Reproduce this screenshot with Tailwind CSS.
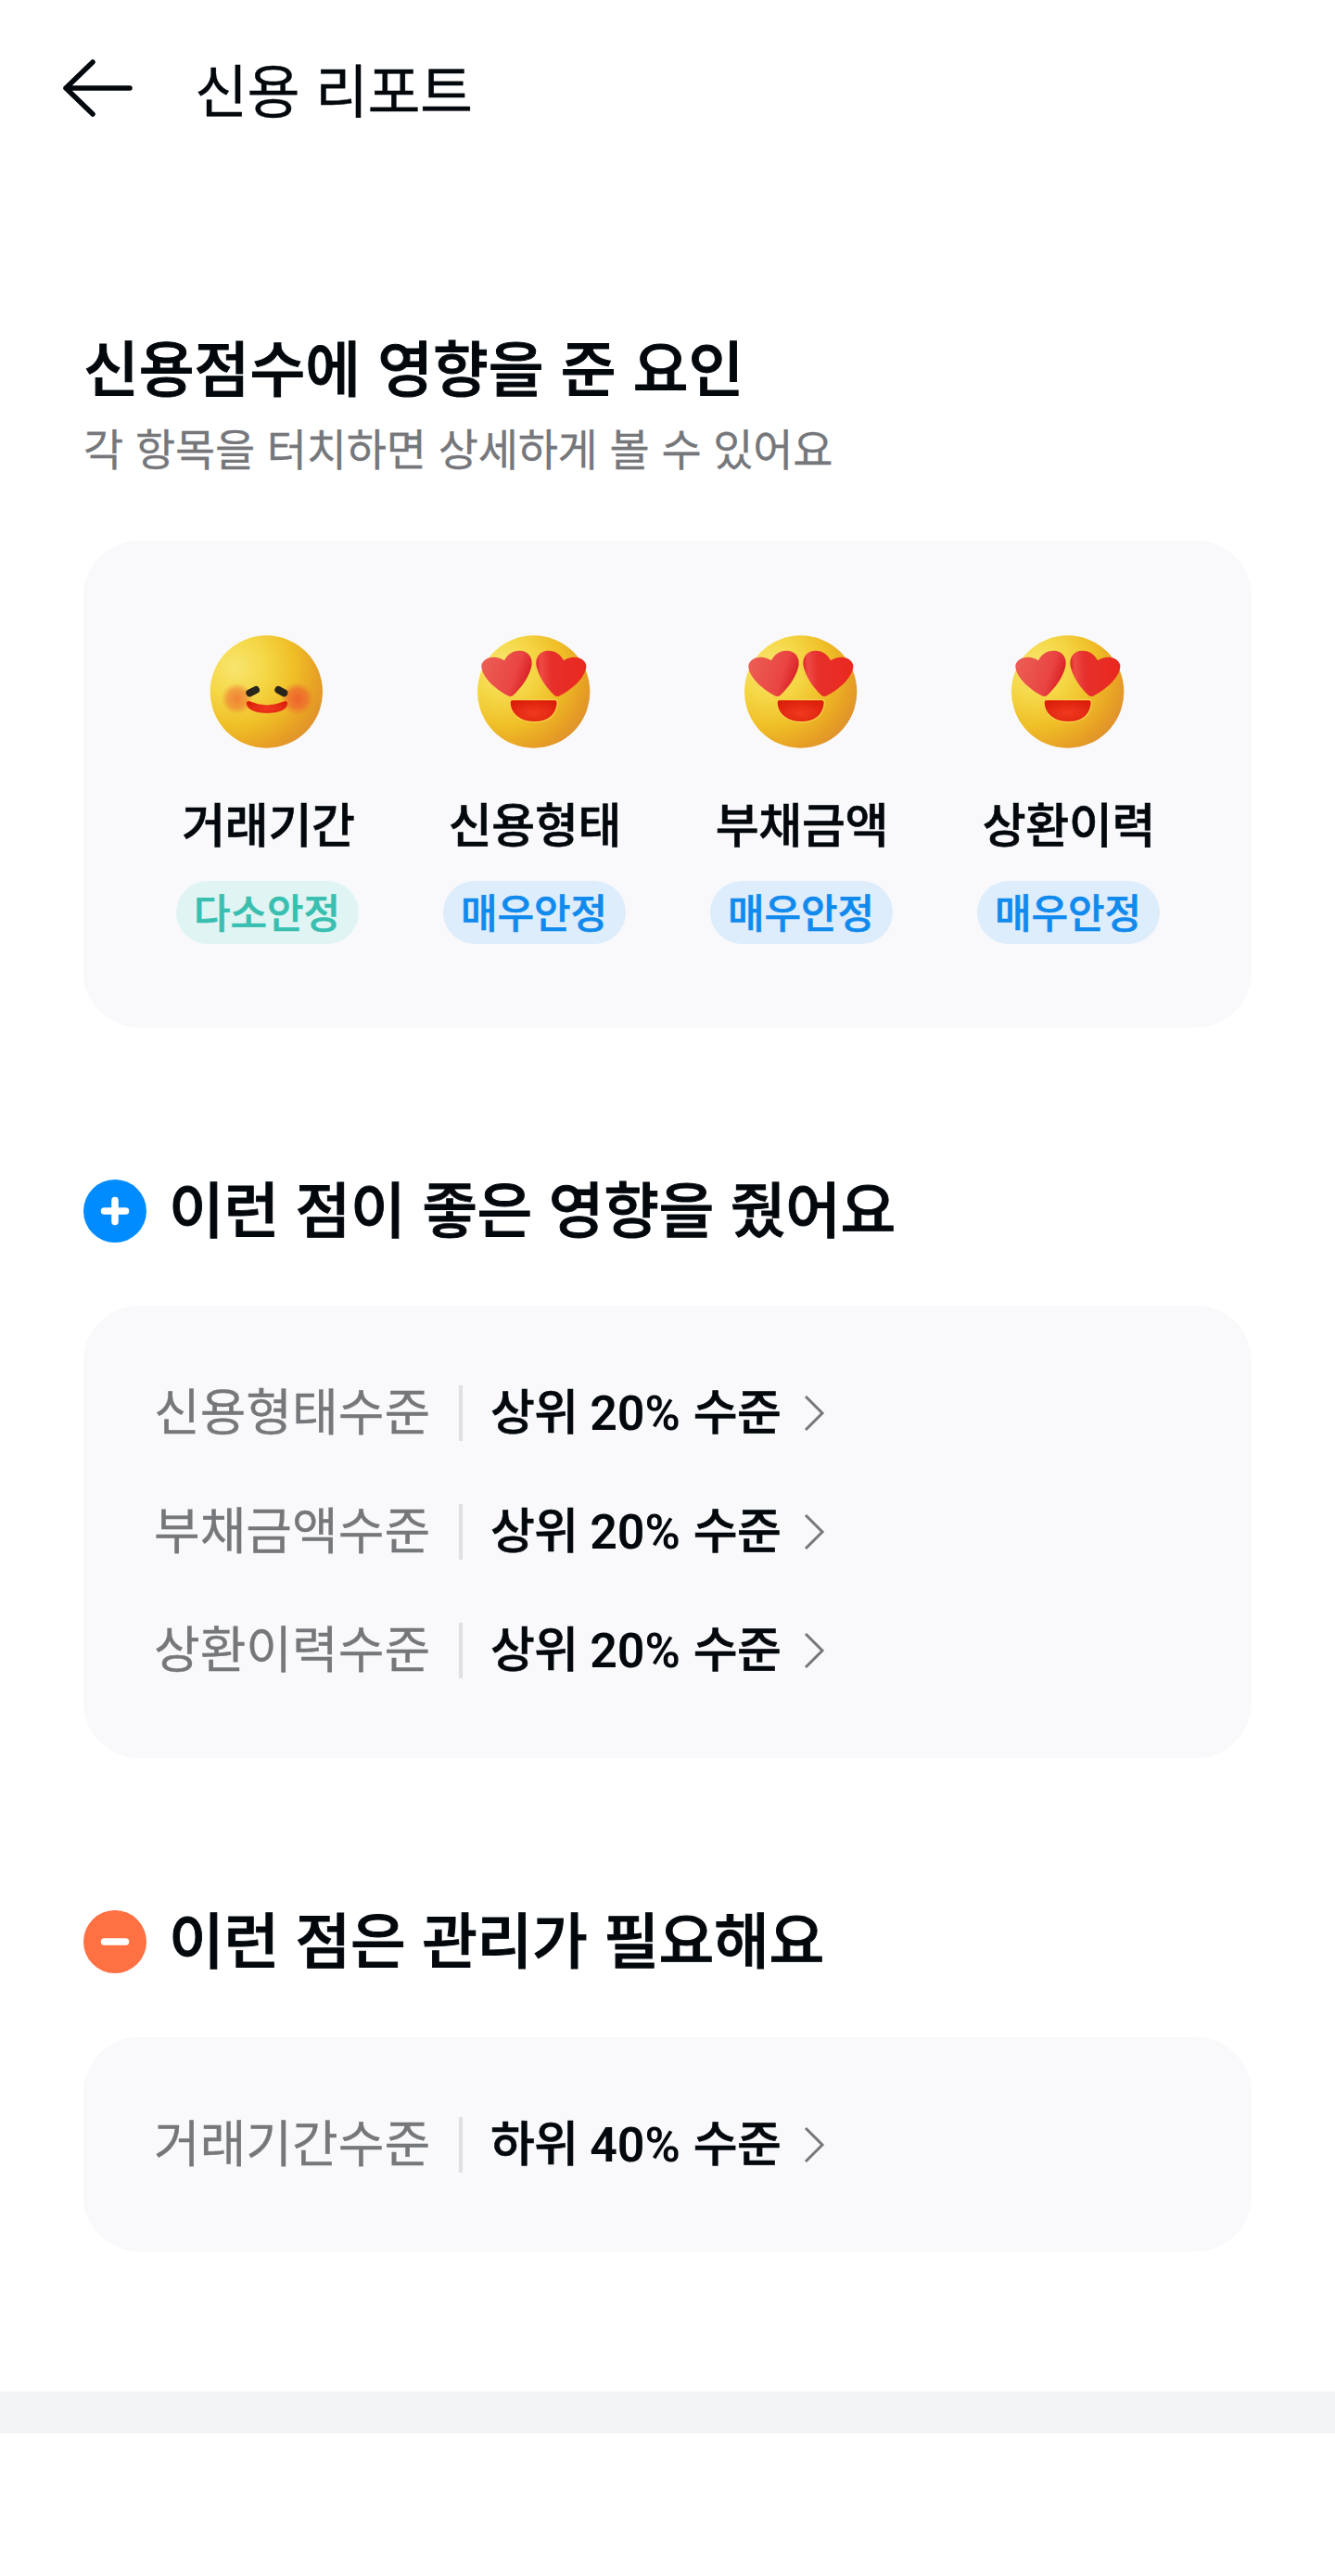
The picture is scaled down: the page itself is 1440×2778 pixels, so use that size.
<!DOCTYPE html>
<html lang="ko">
<head>
<meta charset="utf-8">
<title>신용 리포트</title>
<script src="https://cdn.jsdelivr.net/npm/@tailwindcss/browser@4"></script>
</head>
<body class="bg-white text-[#03080d] font-['Noto_Sans_CJK_KR',sans-serif]">
<svg width="0" height="0" class="absolute" aria-hidden="true">
  <defs>
    <radialGradient id="skin" cx="0.22" cy="0.28" r="0.88">
      <stop offset="0" stop-color="#f8e570"/><stop offset="0.3" stop-color="#f5d848"/><stop offset="0.6" stop-color="#efbf27"/><stop offset="0.85" stop-color="#e79f24"/><stop offset="1" stop-color="#de902e"/>
    </radialGradient>
    <linearGradient id="heartL" x1="0" y1="0.2" x2="1" y2="0.5"><stop offset="0" stop-color="#ec5f55"/><stop offset="0.7" stop-color="#e94543"/><stop offset="0.9" stop-color="#df2b2d"/><stop offset="1" stop-color="#d3161c"/></linearGradient>
    <linearGradient id="heartR" x1="0" y1="0.45" x2="1" y2="0.4"><stop offset="0" stop-color="#dc262a"/><stop offset="0.1" stop-color="#ee4a45"/><stop offset="0.3" stop-color="#e6302b"/><stop offset="1" stop-color="#ea281f"/></linearGradient>
    <radialGradient id="mouth" cx="0.5" cy="0.6" r="0.6"><stop offset="0" stop-color="#f03a20"/><stop offset="1" stop-color="#dc1f0a"/></radialGradient>
    <radialGradient id="blush"><stop offset="0" stop-color="#ef5b2c" stop-opacity="0.9"/><stop offset="0.6" stop-color="#ef6330" stop-opacity="0.65"/><stop offset="1" stop-color="#f08030" stop-opacity="0"/></radialGradient>
    <symbol id="smile" viewBox="9 0 450 450">
      <circle cx="232" cy="228" r="182" fill="url(#skin)"/>
      <circle cx="137" cy="250" r="52" fill="url(#blush)" opacity="0.75"/>
      <circle cx="332" cy="250" r="54" fill="url(#blush)"/>
      <path d="M178 232L198 222M271 222L289 232" stroke="#29241c" stroke-width="24" stroke-linecap="round"/>
      <path d="M166 266Q168 252 184 260Q232 281 284 260Q300 252 302 266Q299 297 234 298Q172 297 166 266Z" fill="url(#mouth)" stroke="#f9cf45" stroke-width="1.5"/>
    </symbol>
    <symbol id="love" viewBox="3 0 450 450">
      <circle cx="227" cy="228" r="182" fill="url(#skin)"/>
      <path d="M58 142C64 116 104 107 132 127C142 106 164 91 191 96C216 102 227 126 218 153C208 187 184 218 161 239Q153 246 142 240C113 224 84 202 69 177Q57 159 58 142Z" fill="url(#heartL)"/>
      <path d="M397 142C391 116 352 107 324 127C314 106 292 91 265 96C240 102 229 126 238 153C248 187 271 218 294 239Q303 246 313 240C342 224 371 202 386 177Q398 159 397 142Z" fill="url(#heartR)"/>
      <path d="M158 254H296Q304 254 304 263C302 301 276 326 230 326C182 326 151 299 150 263Q150 254 158 254Z" fill="url(#mouth)" stroke="#f9d04a" stroke-width="4"/>
    </symbol>
  </defs>
</svg>

<header class="flex h-[190px] items-center gap-[64px] pl-[66px]">
  <svg class="h-[64px] w-[80px]" viewBox="0 0 80 64" fill="none" stroke="#03080d" stroke-width="5.5" stroke-linecap="round" stroke-linejoin="round"><path d="M34 4L5 32L34 60M5 32H74"/></svg>
  <h1 class="-mt-[1px] text-[62px] leading-[80px] tracking-[-0.5px] [-webkit-text-stroke:0.4px]">신용 리포트</h1>
</header>

<main class="px-[90px]">
  <section class="pt-[155px]">
    <h2 class="pt-[1px] text-[65px] leading-[96px] font-medium [-webkit-text-stroke:1px]">신용점수에 영향을 준 요인</h2>
    <p class="mt-[5px] text-[47px] leading-[70px] tracking-[-0.25px] text-[#75777b] [-webkit-text-stroke:0.3px]">각 항목을 터치하면 상세하게 볼 수 있어요</p>
    <div class="mt-[66px] grid h-[525px] grid-cols-4 rounded-[60px] bg-[#f9f9fb] px-[54px] pt-[87px]">
      <div class="flex flex-col items-center"><svg class="h-[150px] w-[150px]"><use href="#smile"/></svg><span class="mt-[30px] pl-[3px] text-[51px] leading-[74px] font-medium tracking-[-0.3px] [-webkit-text-stroke:0.6px]">거래기간</span><span class="mt-[26px] flex h-[68px] w-[197px] items-center justify-center rounded-full bg-[#e0f5f3] pb-[5px] text-[43px] leading-[62px] font-medium text-[#38bfb0] [-webkit-text-stroke:0.6px]">다소안정</span></div>
      <div class="flex flex-col items-center"><svg class="h-[150px] w-[150px]"><use href="#love"/></svg><span class="mt-[30px] pl-[2px] text-[51px] leading-[74px] font-medium tracking-[-0.3px] [-webkit-text-stroke:0.6px]">신용형태</span><span class="mt-[26px] flex h-[68px] w-[197px] items-center justify-center rounded-full bg-[#deedfb] pb-[5px] text-[43px] leading-[62px] font-medium text-[#118aed] [-webkit-text-stroke:0.6px]">매우안정</span></div>
      <div class="flex flex-col items-center"><svg class="h-[150px] w-[150px]"><use href="#love"/></svg><span class="mt-[30px] pl-[2px] text-[51px] leading-[74px] font-medium tracking-[-0.3px] [-webkit-text-stroke:0.6px]">부채금액</span><span class="mt-[26px] flex h-[68px] w-[197px] items-center justify-center rounded-full bg-[#deedfb] pb-[5px] text-[43px] leading-[62px] font-medium text-[#118aed] [-webkit-text-stroke:0.6px]">매우안정</span></div>
      <div class="flex flex-col items-center"><svg class="h-[150px] w-[150px]"><use href="#love"/></svg><span class="mt-[30px] pl-[2px] text-[51px] leading-[74px] font-medium tracking-[-0.3px] [-webkit-text-stroke:0.6px]">상환이력</span><span class="mt-[26px] flex h-[68px] w-[197px] items-center justify-center rounded-full bg-[#deedfb] pb-[5px] text-[43px] leading-[62px] font-medium text-[#118aed] [-webkit-text-stroke:0.6px]">매우안정</span></div>
    </div>
  </section>

  <section class="pt-[150px]">
    <div class="flex h-[96px] items-center gap-[24px]">
      <svg class="size-[68px]" viewBox="0 0 68 68"><circle cx="34" cy="34" r="34" fill="#008cff"/><path d="M22.5 34H45.5M34 22.5V45.5" stroke="#fff" stroke-width="7.5" stroke-linecap="round"/></svg>
      <h2 class="pb-[9px] text-[65px] leading-[87px] font-medium tracking-[-0.4px] [-webkit-text-stroke:0.9px]">이런 점이 좋은 영향을 줬어요</h2>
    </div>
    <ul class="mt-[54px] flex h-[488px] flex-col rounded-[60px] bg-[#f9f9fb] pt-[52px] pl-[76px]">
      <li class="flex h-[128px] items-center"><span class="w-[329px] pb-[8px] text-[54px] leading-[80px] text-[#75777b] [-webkit-text-stroke:0.3px]">신용형태수준</span><i class="h-[60px] w-[4px] bg-[#dfe0e3]"></i><span class="ml-[30px] w-[338px] pb-[4px] text-[52px] leading-[76px] font-medium tracking-[-0.7px] [-webkit-text-stroke:0.6px]">상위 <b class="-ml-px font-[Roboto] text-[52px] font-semibold tracking-normal [-webkit-text-stroke:0]">20%</b> 수준</span><svg class="h-[42px] w-[24px]" viewBox="0 0 24 42" fill="none" stroke="#75777b" stroke-width="3"><path d="M2 3L20 21L2 39"/></svg></li>
      <li class="flex h-[128px] items-center"><span class="w-[329px] pb-[8px] text-[54px] leading-[80px] text-[#75777b] [-webkit-text-stroke:0.3px]">부채금액수준</span><i class="h-[60px] w-[4px] bg-[#dfe0e3]"></i><span class="ml-[30px] w-[338px] pb-[4px] text-[52px] leading-[76px] font-medium tracking-[-0.7px] [-webkit-text-stroke:0.6px]">상위 <b class="-ml-px font-[Roboto] text-[52px] font-semibold tracking-normal [-webkit-text-stroke:0]">20%</b> 수준</span><svg class="h-[42px] w-[24px]" viewBox="0 0 24 42" fill="none" stroke="#75777b" stroke-width="3"><path d="M2 3L20 21L2 39"/></svg></li>
      <li class="flex h-[128px] items-center"><span class="w-[329px] pb-[8px] text-[54px] leading-[80px] text-[#75777b] [-webkit-text-stroke:0.3px]">상환이력수준</span><i class="h-[60px] w-[4px] bg-[#dfe0e3]"></i><span class="ml-[30px] w-[338px] pb-[4px] text-[52px] leading-[76px] font-medium tracking-[-0.7px] [-webkit-text-stroke:0.6px]">상위 <b class="-ml-px font-[Roboto] text-[52px] font-semibold tracking-normal [-webkit-text-stroke:0]">20%</b> 수준</span><svg class="h-[42px] w-[24px]" viewBox="0 0 24 42" fill="none" stroke="#75777b" stroke-width="3"><path d="M2 3L20 21L2 39"/></svg></li>
    </ul>
  </section>

  <section class="pt-[150px]">
    <div class="flex h-[96px] items-center gap-[24px]">
      <svg class="size-[68px]" viewBox="0 0 68 68"><circle cx="34" cy="34" r="34" fill="#ff7043"/><path d="M22.5 34H45.5" stroke="#fff" stroke-width="7.5" stroke-linecap="round"/></svg>
      <h2 class="pb-[9px] text-[65px] leading-[87px] font-medium tracking-[-0.4px] [-webkit-text-stroke:0.9px]">이런 점은 관리가 필요해요</h2>
    </div>
    <ul class="mt-[55px] flex h-[231px] flex-col rounded-[60px] bg-[#f9f9fb] pt-[52px] pl-[76px]">
      <li class="flex h-[128px] items-center"><span class="w-[329px] pb-[8px] text-[54px] leading-[80px] text-[#75777b] [-webkit-text-stroke:0.3px]">거래기간수준</span><i class="h-[60px] w-[4px] bg-[#dfe0e3]"></i><span class="ml-[30px] w-[338px] pb-[4px] text-[52px] leading-[76px] font-medium tracking-[-0.7px] [-webkit-text-stroke:0.6px]">하위 <b class="-ml-px font-[Roboto] text-[52px] font-semibold tracking-normal [-webkit-text-stroke:0]">40%</b> 수준</span><svg class="h-[42px] w-[24px]" viewBox="0 0 24 42" fill="none" stroke="#75777b" stroke-width="3"><path d="M2 3L20 21L2 39"/></svg></li>
    </ul>
  </section>
</main>
<div class="mt-[151px] h-[45px] bg-[#f3f4f6]"></div>
</body>
</html>
